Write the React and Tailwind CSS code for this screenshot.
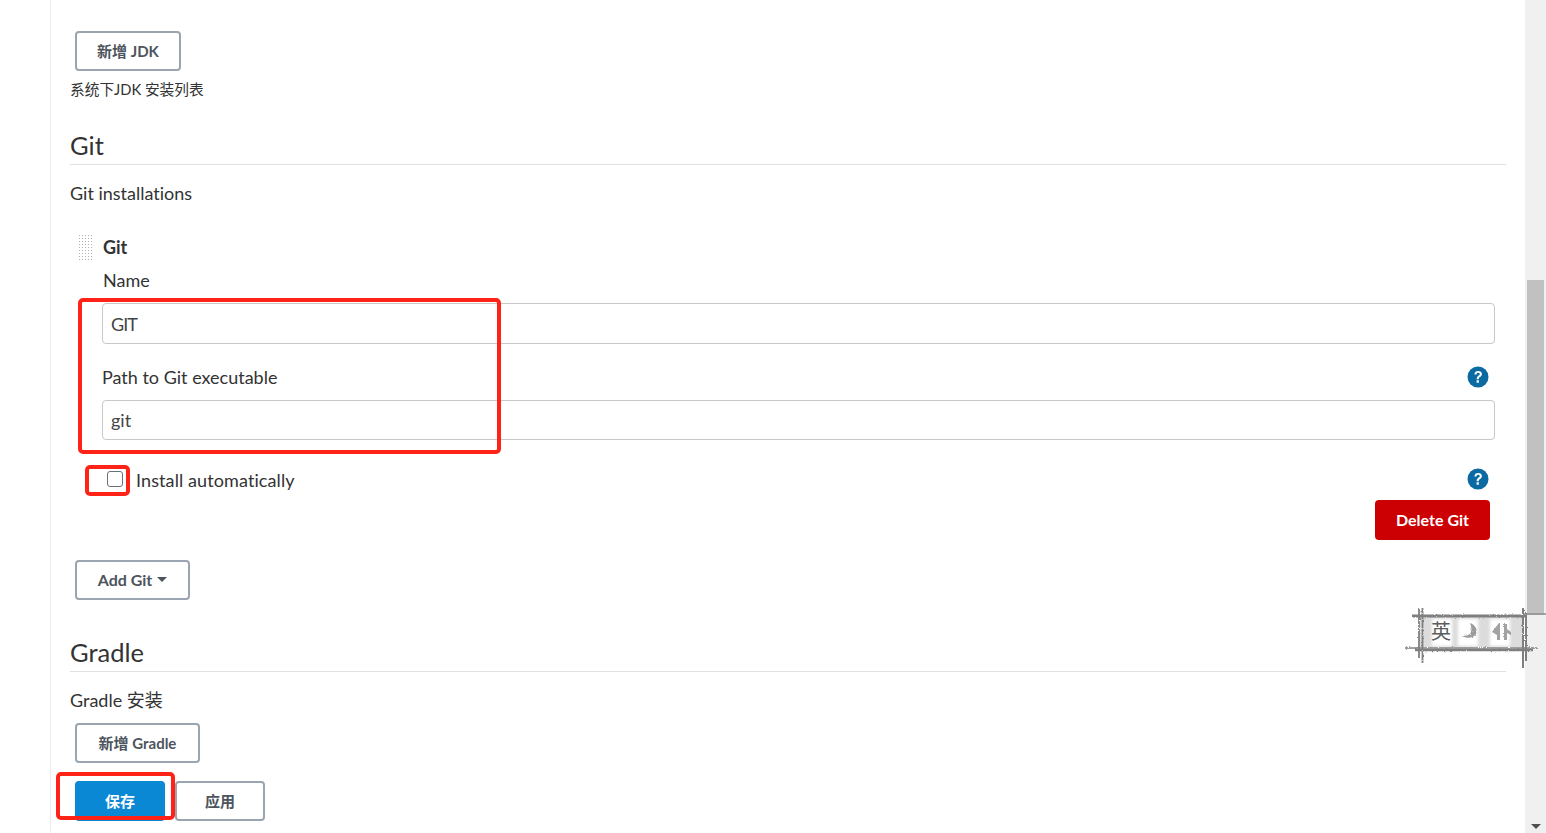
import React from "react";

const outlineBtn =
  "h-10 rounded-[4px] border-2 border-[#9aa5b1] bg-white font-bold text-[#4d545d] flex items-center justify-center";

function HelpIcon() {
  return (
    <svg width="22" height="22" viewBox="0 0 22 22" className="block">
      <circle cx="11" cy="11" r="10.5" fill="#0b6aa2" />
      <path d="M7.4 8.4c.2-2.2 1.7-3.4 3.8-3.4 2.2 0 3.7 1.3 3.7 3.1 0 1.4-.7 2.2-1.9 3-1 .6-1.3 1.1-1.3 2.1h-2c0-1.7.4-2.5 1.7-3.4.9-.6 1.4-1 1.4-1.7 0-.8-.7-1.4-1.6-1.4-1 0-1.7.6-1.8 1.7z" fill="#fff" />
      <rect x="9.6" y="14.3" width="2.3" height="2.4" fill="#fff" />
    </svg>
  );
}

function Section({ title }) {
  return (
    <div className="mr-[19px] border-b border-[#dfe1e3] h-[36px] text-[25.5px] leading-[33px] text-[#333]">
      {title}
    </div>
  );
}

// the little sketchy ime toolbar floating over the page
function Watermark() {
  return (
    <div className="absolute left-[1405px] top-[607px] w-[141px] h-[62px] pointer-events-none">
      <svg width="141" height="62" viewBox="0 0 141 62" className="absolute inset-0">
        <defs>
          <filter id="rough" x="-5%" y="-5%" width="110%" height="110%">
            <feTurbulence type="fractalNoise" baseFrequency="0.7" numOctaves="2" seed="4" />
            <feDisplacementMap in="SourceGraphic" scale="2.5" />
            <feGaussianBlur stdDeviation="0.45" />
          </filter>
          <filter id="soft">
            <feGaussianBlur stdDeviation="1.6" />
          </filter>
        </defs>
        <rect x="15" y="10" width="103" height="30" fill="#dcdcdc" />
        <g filter="url(#soft)" fill="#fff">
          <rect x="27" y="12" width="20" height="27" />
          <rect x="53" y="12" width="20" height="27" />
          <rect x="85" y="12" width="20" height="27" />
        </g>
        <g filter="url(#rough)" stroke="#7f7f7f" fill="none">
          <path d="M7 9 H122" strokeWidth="3" />
          <path d="M0 41 H132" strokeWidth="1.5" />
          <path d="M10 43 H128" strokeWidth="2.5" />
          <path d="M14 1 V51 M17.5 1 V56" strokeWidth="1.8" />
          <path d="M118 1 V61 M121 6 V54" strokeWidth="2" />
        </g>
        <path d="M65 16c5 2 8 6 6 11-2 4-9 5-14 2 4 0 8-1 9-4 1-3 0-6-1-9z" fill="#9c9c9c" filter="url(#rough)" />
        <path d="M94 16l-7 9 5 3v5h3V16zM99 16v17h3v-7l4 2v-3l-4-3v-6z" fill="#a2a2a2" filter="url(#rough)" />
        <path d="M118 7 H141" stroke="#8d8d8d" strokeWidth="1.5" />
      </svg>
      <span className="absolute left-[26px] top-[11px] text-[20px] leading-[26px] text-[#5c5c5c] font-['Noto_Sans_CJK_SC',sans-serif]">
        英
      </span>
    </div>
  );
}

export default function App() {
  return (
    <div className="relative h-[833px] overflow-hidden bg-white flex font-['Lato','Noto_Sans_CJK_SC',sans-serif] text-[#333] [font-variant-ligatures:none]">
      <div className="w-[51px] shrink-0 border-r border-[#eeeeee]" />

      <main className="flex-1 pl-[19px]">
        <div className="pt-[31px] pl-[5px]">
          <button className={`${outlineBtn} w-[106px] text-[15px]`}>新增 JDK</button>
        </div>
        <p className="mt-[8px] h-[20px] text-[14.7px] leading-[20px]">系统下JDK 安装列表</p>

        <div className="mt-[30px]">
          <Section title="Git" />
        </div>
        <p className="mt-[15px] h-[26px] text-[18px] leading-[26px]">Git installations</p>

        <div className="mt-[27px] pl-[8px] flex items-center h-[28px]">
          <div className="w-[14px] h-[26px] bg-[radial-gradient(#b0b0b0_1px,transparent_1px)] bg-[length:3px_3px]" />
          <span className="ml-[11px] text-[18px] font-bold">Git</span>
        </div>

        <div className="pl-[32px] mr-[30px]">
          <div className="mt-[6px] h-[26px] pl-px text-[18px] leading-[26px]">Name</div>
          <input
            readOnly
            value="GIT"
            className="mt-[10px] block w-full h-[41px] rounded-[4px] border border-[#c8c8c8] px-2 text-[18px] tracking-[-1px] text-[#444] outline-none font-['Lato']"
          />

          <div className="mt-[20px] flex items-center justify-between h-[26px]">
            <span className="text-[18px] leading-[26px]">Path to Git executable</span>
            <span className="mr-[6px]">
              <HelpIcon />
            </span>
          </div>
          <input
            readOnly
            value="git"
            className="mt-[10px] block w-full h-[40px] rounded-[4px] border border-[#c8c8c8] px-2 text-[18px] text-[#444] outline-none font-['Lato']"
          />

          <div className="mt-[27px] flex items-center justify-between h-[26px] -ml-[27px]">
            <label className="flex items-center">
              <span className="ml-[32px] block w-4 h-4 rounded-[3px] border border-[#6b7078] bg-white -mt-[3px]" />
              <span className="ml-[13px] text-[18px] leading-[26px] tracking-[0.1px]">Install automatically</span>
            </label>
            <span className="mr-[6px] -mt-[2px]">
              <HelpIcon />
            </span>
          </div>

          <div className="mt-[7px] flex justify-end pr-[5px]">
            <button className="h-10 w-[115px] rounded-[4px] bg-[#cc0003] text-[16px] font-bold text-white">
              Delete Git
            </button>
          </div>
        </div>

        <div className="mt-[20px] pl-[5px]">
          <button className={`${outlineBtn} w-[115px] text-[16px]`}>
            Add Git
            <span className="ml-[5px] mb-[2px] w-0 h-0 border-x-[5px] border-x-transparent border-t-[5px] border-t-[#4d545d]" />
          </button>
        </div>

        <div className="mt-[36px]">
          <Section title="Gradle" />
        </div>
        <p className="mt-[15px] h-[26px] text-[18px] leading-[26px]">Gradle 安装</p>

        <div className="mt-[10px] pl-[5px]">
          <button className={`${outlineBtn} w-[125px] text-[15px]`}>新增 Gradle</button>
        </div>

        <div className="mt-[18px] pl-[5px] flex gap-[10px]">
          <button className="h-10 w-[90px] rounded-[4px] bg-[#0b88d4] text-[15px] font-bold text-white">保存</button>
          <button className={`${outlineBtn} w-[90px] text-[15px]`}>应用</button>
        </div>
      </main>

      {/* scrollbar */}
      <div className="relative w-[21px] shrink-0 bg-[#f0f0f0]">
        <div className="absolute left-[2px] top-[280px] w-[17px] h-[335px] bg-[#c1c1c1]" />
        <div className="absolute left-[6px] bottom-[4px] w-0 h-0 border-x-[5px] border-x-transparent border-t-[5px] border-t-[#505050]" />
      </div>

      {/* screenshot annotations */}
      <div className="absolute left-[78px] top-[298px] w-[423px] h-[156px] border-4 border-[#ff2317] rounded-[5px]" />
      <div className="absolute left-[85px] top-[465px] w-[45px] h-[31px] border-4 border-[#ff2317] rounded-[5px]" />
      <div className="absolute left-[56px] top-[772px] w-[119px] h-[48px] border-4 border-[#ff2317] rounded-[5px]" />

      <Watermark />
    </div>
  );
}
